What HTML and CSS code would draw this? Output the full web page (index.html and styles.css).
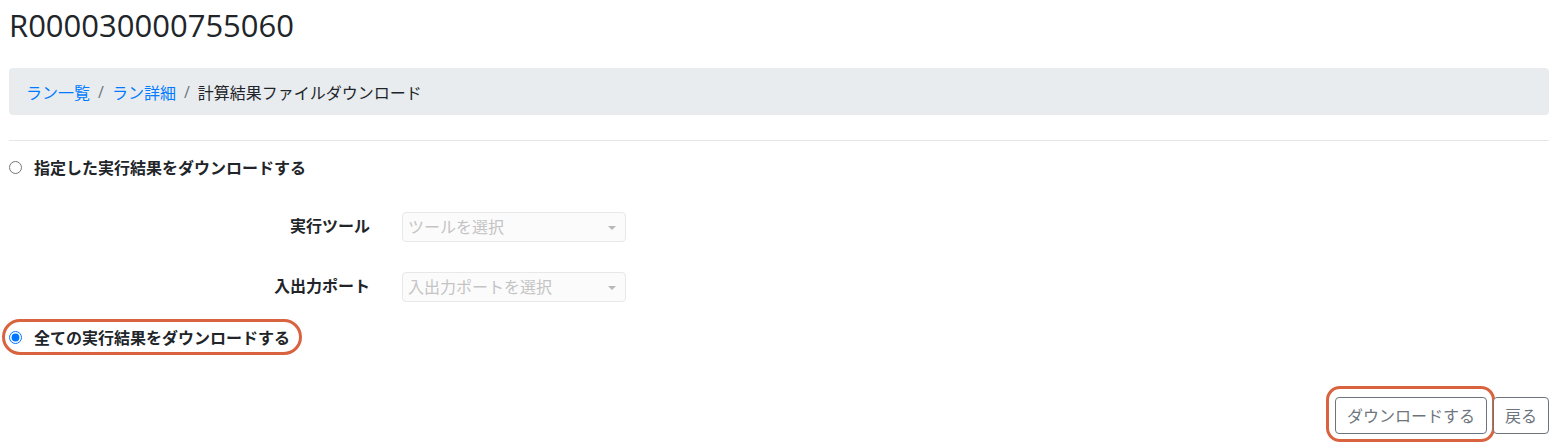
FILE: index.html
```html
<!DOCTYPE html>
<html lang="ja">
<head>
    <meta charset="UTF-8">
    <meta name="viewport" content="width=device-width, initial-scale=1.0">
    <title>R000030000755060</title>
    <link rel="stylesheet" href="styles.css">
</head>

<body>
    <div class="page">
        <h1 class="title">R000030000755060</h1>

        <nav class="breadcrumb">
            <a href="#">ラン一覧</a>
            <span class="sep">/</span>
            <a href="#">ラン詳細</a>
            <span class="sep">/</span>
            <span class="current">計算結果ファイルダウンロード</span>
        </nav>

        <hr class="rule">

        <form class="download-form">
            <label class="choice first">
                <input type="radio" name="target" value="selected">
                <span>指定した実行結果をダウンロードする</span>
            </label>

            <div class="field">
                <span class="field-label">実行ツール</span>
                <span class="picker">ツールを選択<i class="caret"></i></span>
            </div>
            <div class="field">
                <span class="field-label">入出力ポート</span>
                <span class="picker">入出力ポートを選択<i class="caret"></i></span>
            </div>

            <label class="choice last">
                <input type="radio" name="target" value="all" checked>
                <span>全ての実行結果をダウンロードする</span>
                <span class="mark mark-pill"></span>
            </label>

            <div class="actions">
                <button type="submit" class="btn btn-download">ダウンロードする<span class="mark mark-box"></span></button>
                <button type="button" class="btn">戻る</button>
            </div>
        </form>
    </div>
</body>
</html>
```

FILE: styles.css
```css
body {
    margin: 0;
    padding: 0;
    background-color: #fff;
    color: #212529;
    font-family: "Noto Sans CJK JP", "Noto Sans", sans-serif;
    font-size: 16px;
}

.page {
    padding: 0 15px 24px 9px;
}

.title {
    margin: 6px 0 24px 0;
    font-family: "Open Sans", "Noto Sans CJK JP", sans-serif;
    font-size: 31px;
    font-weight: 500;
    line-height: 38px;
    color: #212529;
}

/* breadcrumb bar */
.breadcrumb {
    display: flex;
    align-items: center;
    height: 47px;
    padding: 0 17px;
    background-color: #e9ecef;
    border-radius: 4px;
    line-height: 24px;
}

.breadcrumb a {
    color: #007bff;
    text-decoration: none;
}

.breadcrumb .sep {
    color: #6c757d;
    padding: 0 8px;
    font-family: "Open Sans", sans-serif;
}

.rule {
    margin: 25px 0 0 0;
    border: 0;
    border-top: 1px solid #e6e6e6;
}

/* radio choices */
.choice {
    position: relative;
    display: flex;
    align-items: center;
    height: 24px;
    font-weight: 700;
    line-height: 24px;
}

.choice input {
    width: 13px;
    height: 13px;
    margin: 0 12px 0 0;
}

.choice.first {
    margin-top: 14px;
}

.choice.last {
    margin-top: 23px;
}

/* tool / port pickers */
.field {
    display: grid;
    grid-template-columns: 361px 224px;
    column-gap: 32px;
    align-items: center;
    margin-top: 33px;
}

.field + .field {
    margin-top: 30px;
}

.field-label {
    text-align: right;
    font-weight: 700;
    line-height: 24px;
    padding-bottom: 5px;
}

.picker {
    position: relative;
    display: block;
    height: 26px;
    padding: 0 0 2px 5px;
    border: 1px solid #e8e8e8;
    border-radius: 4px;
    background-color: #fbfbfb;
    color: #c4c4c4;
    line-height: 26px;
}

.caret {
    position: absolute;
    right: 9px;
    top: 13px;
    border-left: 4px solid transparent;
    border-right: 4px solid transparent;
    border-top: 4px solid #b8b8b8;
}

/* bottom buttons */
.actions {
    display: flex;
    justify-content: flex-end;
    gap: 6px;
    margin-top: 48px;
}

.btn {
    position: relative;
    height: 37px;
    padding: 0 11px;
    border: 1px solid #6c757d;
    border-radius: 4px;
    background-color: #fff;
    color: #6c757d;
    font-family: "Noto Sans CJK JP", sans-serif;
    font-size: 16px;
    line-height: 35px;
}

/* orange annotation marks drawn over the screenshot */
.mark {
    position: absolute;
    border: 3px solid #d9633f;
    pointer-events: none;
}

.mark-pill {
    left: -7px;
    top: -6px;
    width: 294px;
    height: 30px;
    border-radius: 18px;
}

.mark-box {
    left: -10px;
    top: -12px;
    right: -9px;
    bottom: -9px;
    border-radius: 14px;
}
```
